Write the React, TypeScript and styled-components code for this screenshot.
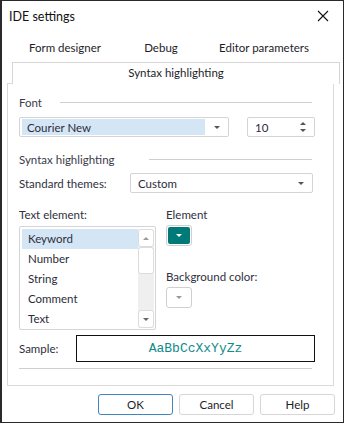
import styled, { createGlobalStyle } from 'styled-components';

const Global = createGlobalStyle`
  html, body { margin: 0; padding: 0; background: #fff; }
  body { font-family: Lato, "Noto Sans", sans-serif; font-size: 11.5px; color: #2f3040; }
  * { box-sizing: border-box; }
`;

const Window = styled.div`
  width: 344px;
  height: 423px;
  border: 1px solid #2a2a2a;
  border-left-width: 2px;
  display: flex;
  flex-direction: column;
  background: #fff;
`;

const TitleBar = styled.div`
  height: 30px;
  display: flex;
  align-items: center;
  justify-content: space-between;
  padding: 0 14px 0 7px;
  color: #111;
  font-size: 12.5px;
`;

const TabRow = styled.div`
  display: flex;
  height: 31px;
  margin: 0 0 0 10px;
  align-items: flex-end;
  padding-bottom: 6px;
`;

const TabLabel = styled.div<{ $w: number }>`
  width: ${(p) => p.$w}px;
  text-align: center;
  color: #1d1d2a;
  line-height: 16px;
`;

const ActiveTab = styled.div`
  position: relative;
  z-index: 1;
  margin: 0 3px -1px 10px;
  height: 22px;
  border: 1px solid #d6d6d6;
  border-bottom: none;
  background: #fff;
  text-align: center;
  line-height: 20px;
  color: #1d1d2a;
`;

const Panel = styled.div`
  margin: 0 9px 0 5px;
  height: 303px;
  border: 1px solid #d9d9d9;
  padding: 10px 18px 0 11px;
  display: flex;
  flex-direction: column;
`;

const GroupHeader = styled.div<{ $top: number; $gap: number }>`
  display: flex;
  align-items: center;
  gap: ${(p) => p.$gap}px;
  margin-top: ${(p) => p.$top}px;
  height: 16px;
  color: #3a3b48;
  &::after {
    content: '';
    flex: 1;
    border-top: 1px solid #cfcfcf;
    margin-right: 3px;
  }
`;

const Row = styled.div<{ $top: number; $gap?: number }>`
  display: flex;
  align-items: center;
  margin-top: ${(p) => p.$top}px;
  gap: ${(p) => p.$gap ?? 0}px;
`;

const Field = styled.div<{ $w: number }>`
  width: ${(p) => p.$w}px;
  height: 20px;
  border: 1px solid #d4d4d4;
  border-radius: 2px;
  display: flex;
  align-items: center;
  padding: 1px 8px 1px 2px;
  background: #fff;
`;

const FieldText = styled.div<{ $selected?: boolean }>`
  flex: 1;
  height: 100%;
  display: flex;
  align-items: center;
  padding-left: 5px;
  margin-right: ${(p) => (p.$selected ? 9 : 0)}px;
  background: ${(p) => (p.$selected ? '#d4e6f5' : 'transparent')};
  color: #2c2d3a;
`;

const Caret = styled.span<{ $color?: string }>`
  width: 0;
  height: 0;
  border-left: 3px solid transparent;
  border-right: 3px solid transparent;
  border-top: 3px solid ${(p) => p.$color ?? '#555'};
`;

const SpinArrows = styled.div`
  display: flex;
  flex-direction: column;
  gap: 4px;
  span:first-child {
    border-top: none;
    border-bottom: 3px solid #555;
  }
`;

const Label = styled.div<{ $w?: number; $top?: number }>`
  width: ${(p) => (p.$w ? `${p.$w}px` : 'auto')};
  margin-top: ${(p) => p.$top ?? 0}px;
  color: #2f3040;
`;

const Columns = styled.div`
  display: flex;
  margin-top: 15px;
  gap: 10px;
`;

const Column = styled.div`
  display: flex;
  flex-direction: column;
`;

const ListBox = styled.div`
  margin-top: 5px;
  width: 137px;
  height: 104px;
  border: 1px solid #d4d4d4;
  border-radius: 2px;
  padding: 2px 1px 1px 2px;
  display: flex;
`;

const Items = styled.div`
  flex: 1;
`;

const Item = styled.div<{ $selected?: boolean }>`
  height: 20px;
  line-height: 20px;
  padding-left: 6px;
  background: ${(p) => (p.$selected ? '#d4e6f5' : 'transparent')};
  color: #2c2d3a;
`;

const ScrollBar = styled.div`
  width: 16px;
  background: #efefef;
  display: flex;
  flex-direction: column;
  justify-content: space-between;
  border-radius: 2px;
`;

const ScrollBtn = styled.div<{ $h: number }>`
  height: ${(p) => p.$h}px;
  border: 1px solid #dcdcdc;
  border-radius: 3px;
  background: #fff;
  display: flex;
  align-items: center;
  justify-content: center;
`;

const ScrollTop = styled.div`
  display: flex;
  flex-direction: column;
`;

const UpCaret = styled(Caret)`
  border-top: none;
  border-bottom: 3px solid #999;
`;

const ColorButton = styled.div<{ $fill: string }>`
  margin-top: 4px;
  width: 26px;
  height: 21px;
  border: 1px solid #d0d0d0;
  border-radius: 3px;
  padding: 1px;
  div {
    width: 100%;
    height: 100%;
    border-radius: 2px;
    background: ${(p) => p.$fill};
    display: flex;
    align-items: center;
    justify-content: center;
  }
`;

const SampleBox = styled.div`
  flex: 1;
  height: 27px;
  border: 1px solid #111;
  display: flex;
  align-items: center;
  justify-content: center;
  font-family: "Liberation Mono", monospace;
  font-size: 13px;
  color: #0f8b8b;
`;

const Separator = styled.div`
  margin-top: 6px;
  margin-right: 3px;
  border-top: 1px solid #cfcfcf;
`;

const Footer = styled.div`
  display: flex;
  justify-content: flex-end;
  gap: 6px;
  padding: 8px 8px 0 0;
`;

const Button = styled.button<{ $default?: boolean }>`
  width: 75px;
  height: 21px;
  font: inherit;
  color: #1d1d2a;
  background: #fff;
  border: 1px solid ${(p) => (p.$default ? '#3f86c0' : '#d6d6d6')};
  border-radius: 3px;
  padding: 0;
`;

function CloseIcon() {
  return (
    <svg width="12" height="12" viewBox="0 0 12 12">
      <path d="M1 1L11 11M11 1L1 11" stroke="#111" strokeWidth="1.1" />
    </svg>
  );
}

export default function App() {
  return (
    <>
      <Global />
      <Window>
        <TitleBar>
          <span>IDE settings</span>
          <CloseIcon />
        </TitleBar>
        <TabRow>
          <TabLabel $w={106}>Form designer</TabLabel>
          <TabLabel $w={86}>Debug</TabLabel>
          <TabLabel $w={120}>Editor parameters</TabLabel>
        </TabRow>
        <ActiveTab>Syntax highlighting</ActiveTab>
        <Panel>
          <GroupHeader $top={0} $gap={18}>Font</GroupHeader>
          <Row $top={7} $gap={18}>
            <Field $w={210}>
              <FieldText $selected>Courier New</FieldText>
              <Caret />
            </Field>
            <Field $w={68}>
              <FieldText>10</FieldText>
              <SpinArrows>
                <Caret />
                <Caret />
              </SpinArrows>
            </Field>
          </Row>
          <GroupHeader $top={14} $gap={34}>Syntax highlighting</GroupHeader>
          <Row $top={6}>
            <Label $w={111}>Standard themes:</Label>
            <Field $w={183}>
              <FieldText>Custom</FieldText>
              <Caret />
            </Field>
          </Row>
          <Columns>
            <Column>
              <Label>Text element:</Label>
              <ListBox>
                <Items>
                  <Item $selected>Keyword</Item>
                  <Item>Number</Item>
                  <Item>String</Item>
                  <Item>Comment</Item>
                  <Item>Text</Item>
                </Items>
                <ScrollBar>
                  <ScrollTop>
                    <ScrollBtn $h={18}>
                      <UpCaret />
                    </ScrollBtn>
                    <ScrollBtn $h={27} />
                  </ScrollTop>
                  <ScrollBtn $h={18}>
                    <Caret $color="#666" />
                  </ScrollBtn>
                </ScrollBar>
              </ListBox>
            </Column>
            <Column>
              <Label>Element</Label>
              <ColorButton $fill="#007a78">
                <div>
                  <Caret $color="#fff" />
                </div>
              </ColorButton>
              <Label $top={24}>Background color:</Label>
              <ColorButton $fill="#fff">
                <div>
                  <Caret $color="#999" />
                </div>
              </ColorButton>
            </Column>
          </Columns>
          <Row $top={5}>
            <Label $w={57}>Sample:</Label>
            <SampleBox>AaBbCcXxYyZz</SampleBox>
          </Row>
          <Separator />
        </Panel>
        <Footer>
          <Button $default>OK</Button>
          <Button>Cancel</Button>
          <Button>Help</Button>
        </Footer>
      </Window>
    </>
  );
}
